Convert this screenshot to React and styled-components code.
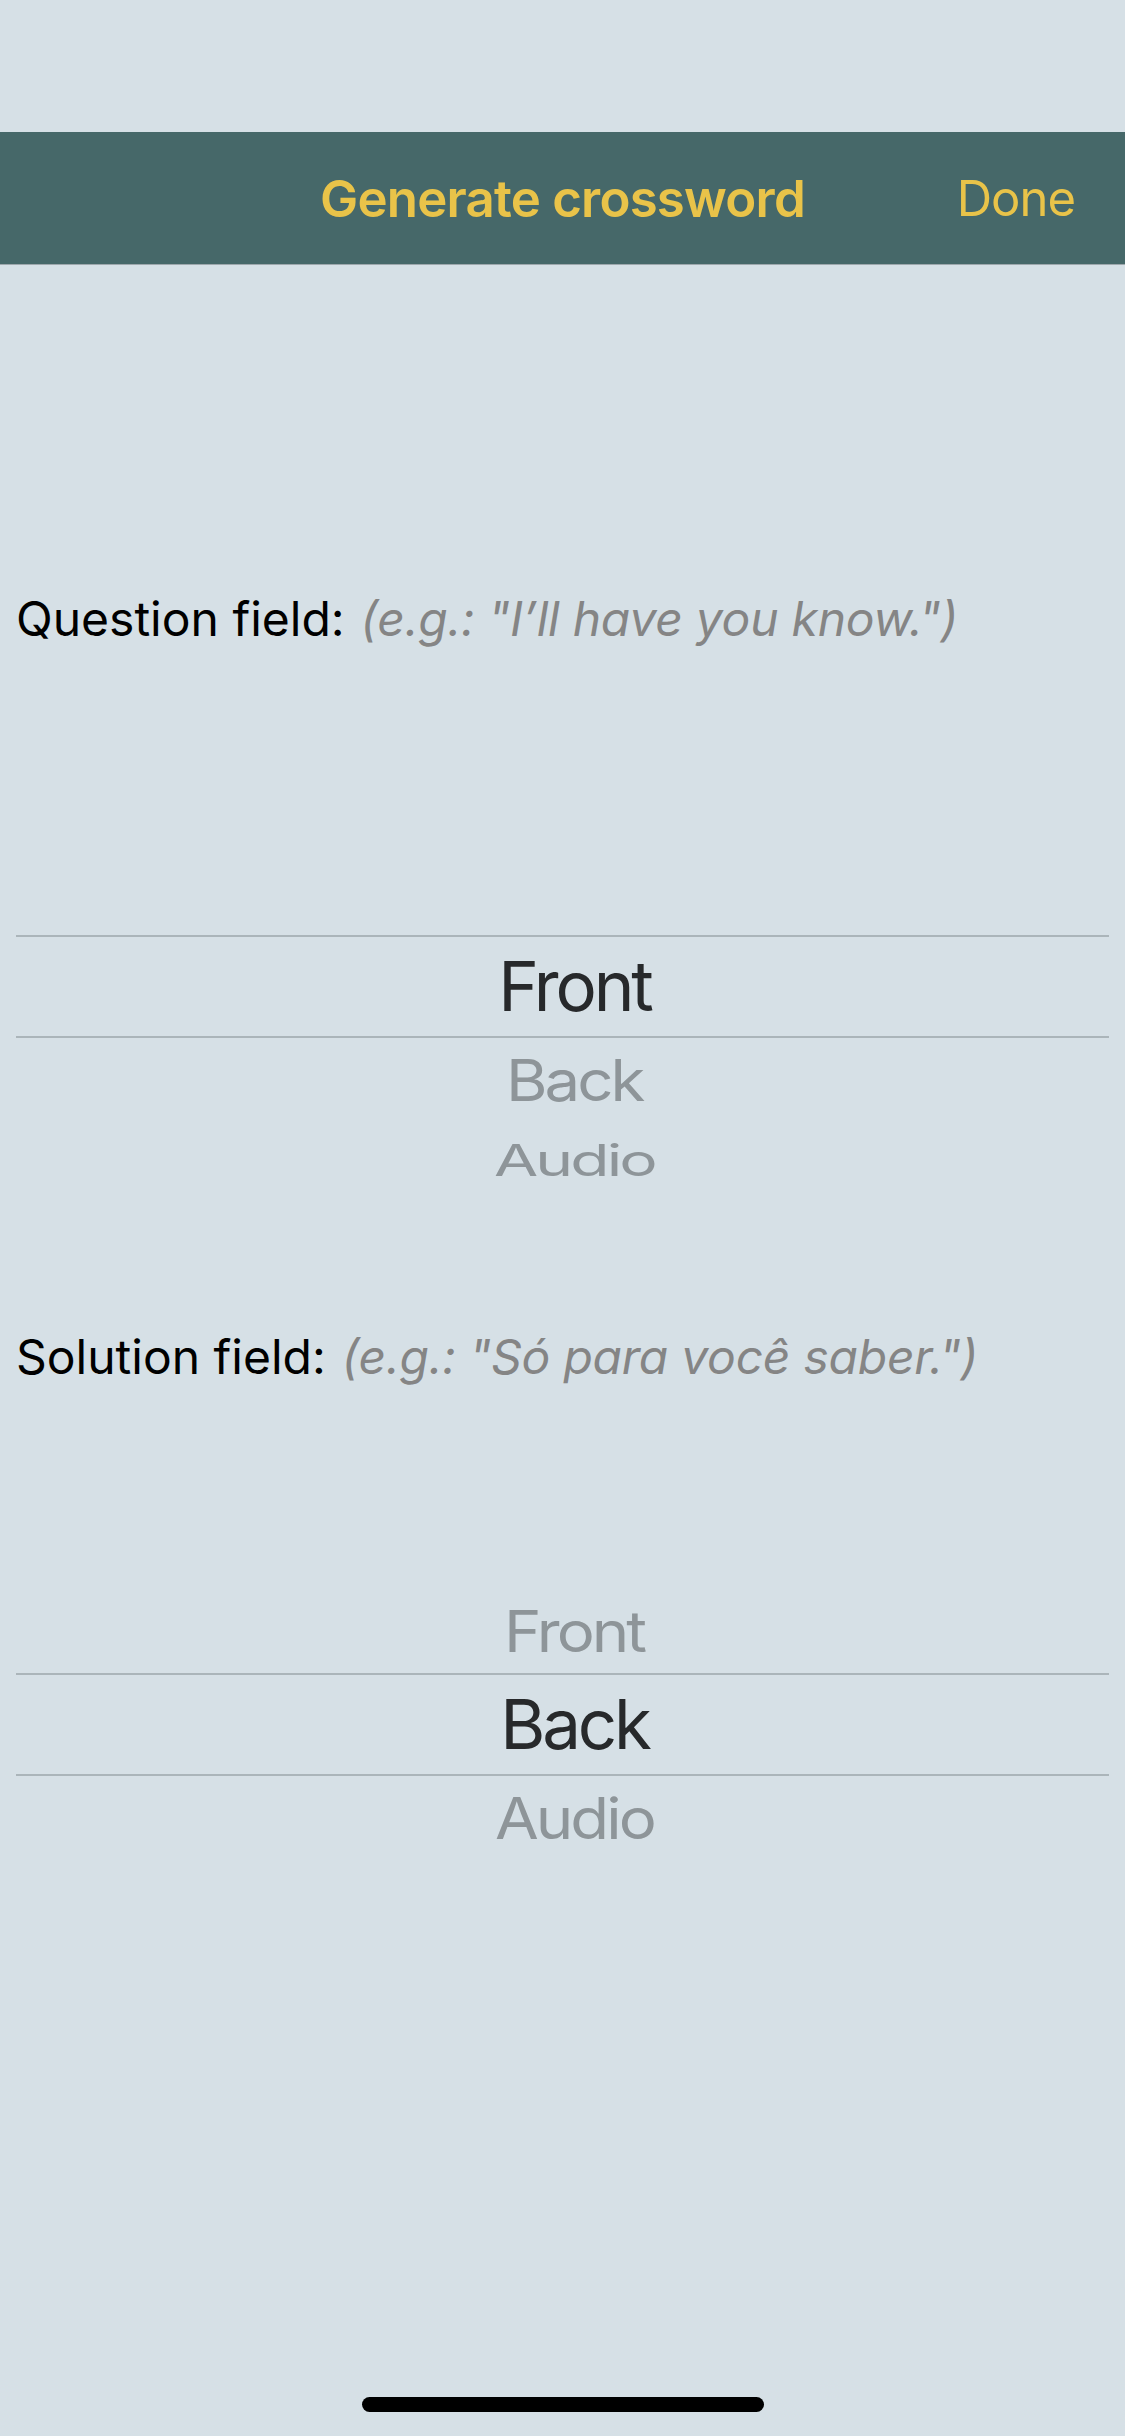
import React from "react";
import styled, { createGlobalStyle, css } from "styled-components";

const GlobalStyle = createGlobalStyle`
  * { box-sizing: border-box; }
  html, body { margin: 0; padding: 0; }
  body {
    background: #d6e0e6;
    font-family: Inter, "Noto Sans", "Liberation Sans", sans-serif;
    -webkit-font-smoothing: antialiased;
  }
`;

const Screen = styled.div`
  display: flex;
  flex-direction: column;
  min-height: 2436px;
  background: #d6e0e6;
  padding-bottom: 24px;
`;

const StatusArea = styled.div`
  height: 132px;
`;

const NavBar = styled.header`
  display: grid;
  grid-template-columns: 1fr auto 1fr;
  align-items: center;
  height: 133px;
  background: #466869;
  border-bottom: 1px solid #9ea8ad;
  padding: 0 50px;
`;

const NavTitle = styled.h1`
  grid-column: 2;
  margin: 0;
  font-family: Inter, "Noto Sans", sans-serif;
  font-weight: 600;
  font-size: 51px;
  letter-spacing: -0.8px;
  color: #e9c349;
`;

const NavButton = styled.button`
  grid-column: 3;
  justify-self: end;
  border: 0;
  background: none;
  padding: 0;
  font-family: Inter, "Noto Sans", sans-serif;
  font-weight: 400;
  font-size: 49px;
  letter-spacing: -1px;
  color: #e9c349;
`;

const Content = styled.main`
  display: flex;
  flex-direction: column;
  gap: 129px;
  padding: 325px 16px 0;
`;

const Section = styled.section`
  display: flex;
  flex-direction: column;
  gap: 126px;
`;

const FieldLabel = styled.p`
  margin: 0;
  font-family: Inter, "Noto Sans", sans-serif;
  font-size: 48px;
  line-height: 58px;
  color: #000;
  white-space: nowrap;
`;

const Hint = styled.span`
  font-style: italic;
  color: #858585;
  margin-left: 16px;
  letter-spacing: -0.25px;
`;

const Picker = styled.div`
  display: grid;
  grid-template-rows: 77px 84px 103px 84px 77px;
`;

const Slot = styled.div`
  display: flex;
  align-items: center;
  justify-content: center;
  padding-left: 24px;
  ${(p) =>
    p.$selected &&
    css`
      border-top: 2px solid #abb5ba;
      border-bottom: 2px solid #abb5ba;
    `}
`;

const scales = {
  0: "none",
  1: "scale(0.92, 0.83)",
  2: "scale(0.93, 0.64)",
};

const PickerItem = styled.span`
  font-family: Inter, "Noto Sans", sans-serif;
  font-size: 69px;
  line-height: 1;
  letter-spacing: -3.2px;
  color: ${(p) => (p.$depth === 0 ? "#27292b" : "#8e9599")};
  transform: ${(p) => scales[p.$depth]};
`;

const HomeIndicator = styled.div`
  margin: auto auto 0;
  width: 402px;
  height: 15px;
  border-radius: 8px;
  background: #000;
`;

const OPTIONS = ["Front", "Back", "Audio"];

function WheelPicker({ selected }) {
  const slots = [-2, -1, 0, 1, 2];
  return (
    <Picker>
      {slots.map((offset) => {
        const item = OPTIONS[selected + offset];
        const depth = Math.abs(offset);
        return (
          <Slot key={offset} $selected={offset === 0}>
            {item && <PickerItem $depth={depth}>{item}</PickerItem>}
          </Slot>
        );
      })}
    </Picker>
  );
}

export default function App() {
  return (
    <>
      <GlobalStyle />
      <Screen>
        <StatusArea />
        <NavBar>
          <NavTitle>Generate crossword</NavTitle>
          <NavButton>Done</NavButton>
        </NavBar>
        <Content>
          <Section>
            <FieldLabel>
              Question field:
              <Hint>(e.g.: "I’ll have you know.")</Hint>
            </FieldLabel>
            <WheelPicker selected={0} />
          </Section>
          <Section>
            <FieldLabel>
              Solution field:
              <Hint>(e.g.: "Só para você saber.")</Hint>
            </FieldLabel>
            <WheelPicker selected={1} />
          </Section>
        </Content>
        <HomeIndicator />
      </Screen>
    </>
  );
}
